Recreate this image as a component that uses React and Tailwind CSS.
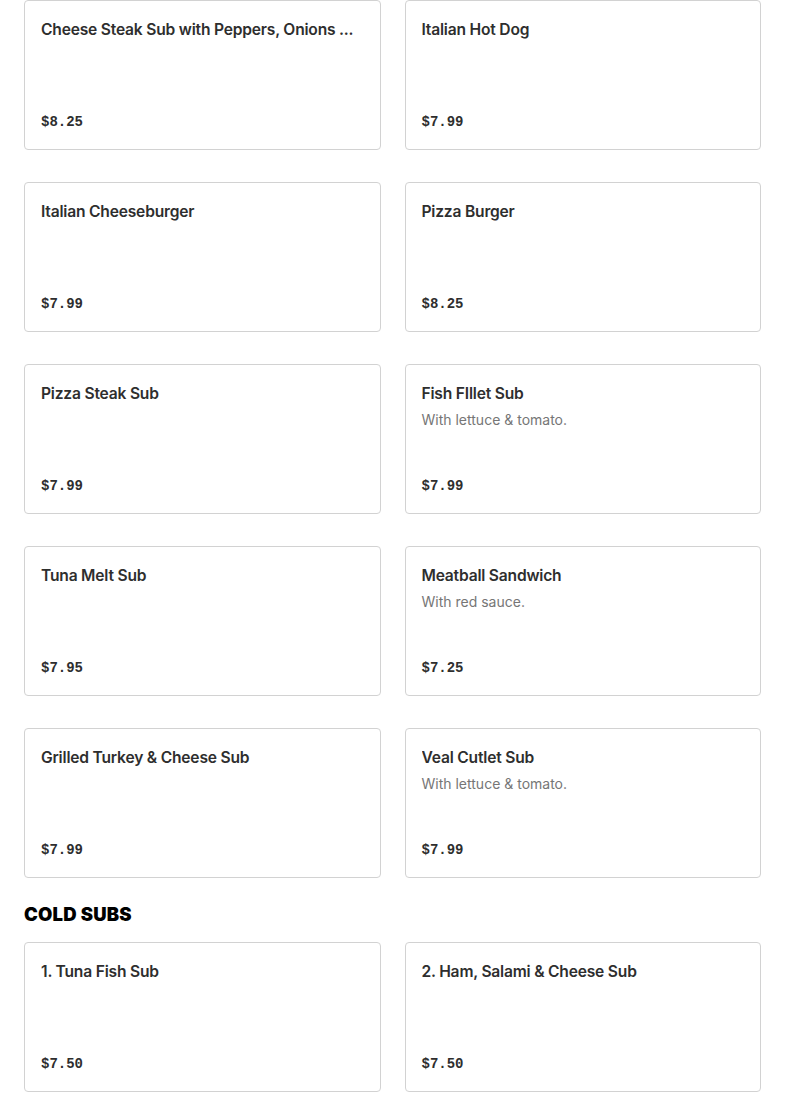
import React from "react";

const hot = [
  { t: "Cheese Steak Sub with Peppers, Onions ...", p: "$8.25" },
  { t: "Italian Hot Dog", p: "$7.99" },
  { t: "Italian Cheeseburger", p: "$7.99" },
  { t: "Pizza Burger", p: "$8.25" },
  { t: "Pizza Steak Sub", p: "$7.99" },
  { t: "Fish FIllet Sub", d: "With lettuce & tomato.", p: "$7.99" },
  { t: "Tuna Melt Sub", p: "$7.95" },
  { t: "Meatball Sandwich", d: "With red sauce.", p: "$7.25" },
  { t: "Grilled Turkey & Cheese Sub", p: "$7.99" },
  { t: "Veal Cutlet Sub", d: "With lettuce & tomato.", p: "$7.99" },
];

const cold = [
  { t: "1. Tuna Fish Sub", p: "$7.50" },
  { t: "2. Ham, Salami & Cheese Sub", p: "$7.50" },
];

function Card({ item }) {
  return (
    <div className="h-[150px] border border-[#d2d2d2] rounded-[4px] bg-white px-4 pt-[17px] pb-[15px] flex flex-col">
      <div className="text-[15.6px] leading-[24px] font-semibold text-[#2e2e2e] whitespace-nowrap overflow-hidden tracking-[-0.2px]" style={{ fontFamily: "Inter, 'Liberation Sans', sans-serif" }}>
        {item.t}
      </div>
      {item.d && (
        <div className="mt-[4px] text-[14px] leading-[20px] text-[#767676]" style={{ fontFamily: "Inter, 'Liberation Sans', sans-serif" }}>
          {item.d}
        </div>
      )}
      <div className="mt-auto text-[14px] leading-[24px] font-bold text-[#2e2e2e]" style={{ fontFamily: "'Liberation Mono', monospace" }}>
        {item.p}
      </div>
    </div>
  );
}

export default function App() {
  return (
    <div className="bg-white min-h-[1113px] px-6">
      <div className="grid grid-cols-2 gap-x-6 gap-y-8">
        {hot.map((it, i) => (
          <Card key={i} item={it} />
        ))}
      </div>
      <h2 className="mt-[25px] mb-[17px] text-[18.5px] leading-[22px] font-black text-black tracking-[0.2px]" style={{ fontFamily: "Inter, 'Liberation Sans', sans-serif" }}>
        COLD SUBS
      </h2>
      <div className="grid grid-cols-2 gap-x-6 gap-y-8">
        {cold.map((it, i) => (
          <Card key={i} item={it} />
        ))}
      </div>
    </div>
  );
}
